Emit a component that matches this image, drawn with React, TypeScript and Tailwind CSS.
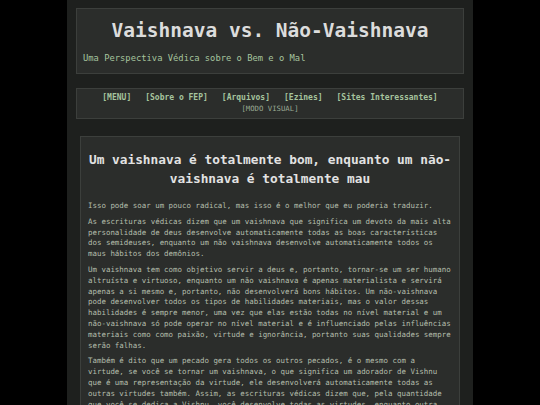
export default function App() {
  const mono = { fontFamily: '"DejaVu Sans Mono", "Liberation Mono", monospace' };
  return (
    <div className="min-h-[405px] bg-black" style={mono}>
      <div className="mx-auto w-[406px] min-h-[405px] bg-[#1e201e] px-[9px] pt-[8px]">
        <header className="border border-[#3c3f3c] bg-[#2b2d2b] px-[6px] pt-[8px] pb-[9px]">
          <h1 className="text-center text-[19.5px] font-bold leading-[28px] text-[#dcdcdc]">
            Vaishnava vs. Não-Vaishnava
          </h1>
          <p className="mt-[7px] text-[8.8px] leading-[12px] text-[#a6c49e]">
            Uma Perspectiva Védica sobre o Bem e o Mal
          </p>
        </header>

        <nav className="mt-[14px] border border-[#3c3f3c] bg-[#2b2d2b] pt-[3px] pb-[4px] text-center">
          <div className="flex justify-center gap-[14px] text-[8px] font-bold leading-[12px] text-[#a6c49e]">
            <a>[MENU]</a>
            <a>[Sobre o FEP]</a>
            <a>[Arquivos]</a>
            <a>[Ezines]</a>
            <a>[Sites Interessantes]</a>
          </div>
          <div className="text-[7.3px] leading-[10px] text-[#9aaa94]">[MODO VISUAL]</div>
        </nav>

        <article className="mx-[4px] mt-[17px] border border-[#3c3f3c] bg-[#2b2d2b] px-[7px] pt-[13px] pb-[10px]">
          <h2 className="text-center text-[12.8px] font-bold leading-[19px] text-[#e2e2e2]">
            Um vaishnava é totalmente bom, enquanto um não-vaishnava é totalmente mau
          </h2>
          <div className="mt-[13px] space-y-[5px] text-[7.45px] leading-[10.8px] text-[#b4beac]">
            <p>Isso pode soar um pouco radical, mas isso é o melhor que eu poderia traduzir.</p>
            <p>
              As escrituras védicas dizem que um vaishnava que significa um devoto da mais alta
              personalidade de deus desenvolve automaticamente todas as boas características dos
              semideuses, enquanto um não vaishnava desenvolve automaticamente todos os maus hábitos
              dos demônios.
            </p>
            <p>
              Um vaishnava tem como objetivo servir a deus e, portanto, tornar-se um ser humano
              altruísta e virtuoso, enquanto um não vaishnava é apenas materialista e servirá apenas
              a si mesmo e, portanto, não desenvolverá bons hábitos. Um não-vaishnava pode
              desenvolver todos os tipos de habilidades materiais, mas o valor dessas habilidades é
              sempre menor, uma vez que elas estão todas no nível material e um não-vaishnava só pode
              operar no nível material e é influenciado pelas influências materiais como como paixão,
              virtude e ignorância, portanto suas qualidades sempre serão falhas.
            </p>
            <p>
              Também é dito que um pecado gera todos os outros pecados, é o mesmo com a virtude, se
              você se tornar um vaishnava, o que significa um adorador de Vishnu que é uma
              representação da virtude, ele desenvolverá automaticamente todas as outras virtudes
              também. Assim, as escrituras védicas dizem que, pela quantidade que você se dedica a
              Vishnu, você desenvolve todas as virtudes, enquanto outra pessoa que não se dedica a
              Vishnu desenvolverá os maus hábitos.
            </p>
          </div>
        </article>
      </div>
    </div>
  );
}
